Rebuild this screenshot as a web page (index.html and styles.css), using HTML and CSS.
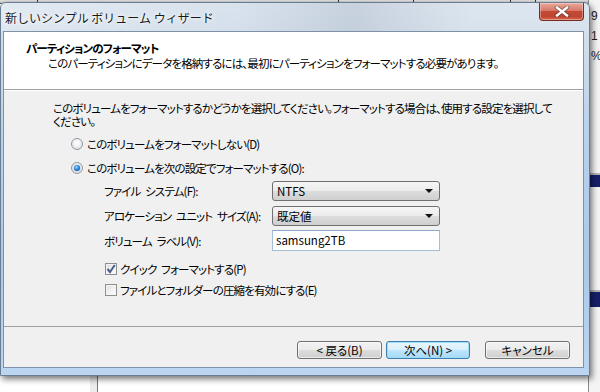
FILE: index.html
```html
<!DOCTYPE html>
<html lang="ja">
<head>
<meta charset="utf-8">
<link rel="stylesheet" href="styles.css">
</head>
<body>
<div class="desk">
  <div class="behind-top">
    <span class="sep s1"></span><span class="sep s2"></span><span class="sep s3"></span><span class="sep s4"></span><span class="sep s5"></span>
  </div>
  <div class="behind-right">
    <div class="br-text">9<br>1<br>%</div>
    <div class="br-band b1"></div>
    <div class="br-band b2"></div>
  </div>
  <div class="behind-bottom"></div>

  <div class="window">
    <div class="titlebar">
      <span class="title">新しいシンプル ボリューム ウィザード</span>
      <div class="close">
        <svg width="16" height="11" viewBox="0 0 16 11">
          <path d="M3 1.5 L13 9.5 M13 1.5 L3 9.5" stroke="#3a2a2a" stroke-width="4" stroke-linecap="square" opacity="0.55"/>
          <path d="M3 1.5 L13 9.5 M13 1.5 L3 9.5" stroke="#ffffff" stroke-width="2.4" stroke-linecap="square"/>
        </svg>
      </div>
    </div>
    <div class="client">
      <div class="header">
        <div class="h-title">パーティションのフォーマット</div>
        <div class="h-sub">このパーティションにデータを格納するには、最初にパーティションをフォーマットする必要があります。</div>
      </div>
      <div class="content">
        <p class="intro">このボリュームをフォーマットするかどうかを選択してください。フォーマットする場合は、使用する設定を選択して<br>ください。</p>
        <div class="radio-row"><span class="radio"></span><span>このボリュームをフォーマットしない(D)</span></div>
        <div class="radio-row second"><span class="radio on"></span><span>このボリュームを次の設定でフォーマットする(O):</span></div>
        <div class="form">
          <div class="frow"><span class="flabel">ファイル システム(F):</span><div class="combo"><span>NTFS</span><span class="arrow"></span></div></div>
          <div class="frow"><span class="flabel">アロケーション ユニット サイズ(A):</span><div class="combo"><span>既定値</span><span class="arrow"></span></div></div>
          <div class="frow r3"><span class="flabel">ボリューム ラベル(V):</span><div class="textbox">samsung2TB</div></div>
          <div class="check-row c1"><span class="check">
            <svg width="10" height="10" viewBox="0 0 10 10"><path d="M1.5 5 L4 8 L8.8 1" fill="none" stroke="#4a5f8e" stroke-width="2"/></svg>
          </span><span>クイック フォーマットする(P)</span></div>
          <div class="check-row c2"><span class="check"></span><span>ファイルとフォルダーの圧縮を有効にする(E)</span></div>
        </div>
      </div>
      <div class="footer">
        <button class="btn">&lt; 戻る(B)</button>
        <button class="btn default">次へ(N) &gt;</button>
        <button class="btn cancel">キャンセル</button>
      </div>
    </div>
  </div>
</div>
</body>
</html>
```

FILE: styles.css
```css
* { box-sizing: border-box; }
html, body {
  margin: 0;
  padding: 0;
  width: 600px;
  height: 392px;
  overflow: hidden;
  background: #ffffff;
  font-family: "Noto Sans CJK JP", "Noto Sans", sans-serif;
  font-size: 11.5px;
  letter-spacing: -0.85px;
  word-spacing: 3px;
  color: #000;
  font-feature-settings: "palt";
  white-space: nowrap;
}
.desk {
  position: relative;
  width: 600px;
  height: 392px;
}
.behind-top {
  position: absolute;
  left: 0; top: 0;
  width: 600px; height: 4px;
  background: linear-gradient(#e6e6e6, #bdbdbd);
  border-bottom: 1px solid #555;
}
.sep { position: absolute; top: 0; width: 1px; height: 4px; background: #333; }
.s1 { left: 37px; } .s2 { left: 338px; } .s3 { left: 413px; } .s4 { left: 510px; } .s5 { left: 535px; }
.behind-right {
  position: absolute;
  left: 588px; top: 0;
  width: 12px; height: 392px;
  background: #f4f4f4;
  border-left: 1px solid #888;
}
.br-text {
  position: absolute;
  left: 2px; top: 6px;
  font-family: "Liberation Sans", sans-serif;
  font-size: 12px;
  letter-spacing: 0;
  line-height: 20px;
  color: #222;
}
.br-band { position: absolute; left: 0; width: 12px; background: #16206a; border-top: 2px solid #b5b5b5; }
.b1 { top: 173px; height: 14px; }
.b2 { top: 290px; height: 17px; }
.behind-bottom {
  position: absolute;
  left: 90px; top: 370px;
  width: 8px; height: 22px;
  background: #ececec;
  border-right: 1px solid #777;
}
.window {
  position: absolute;
  left: 0; top: 2px;
  width: 590px; height: 374px;
  border-radius: 6px 6px 0 0;
  background: linear-gradient(to bottom, #d9e3ee 0, #d3dfeb 30px, #bad3ed 120px, #a9c8ea 260px, #bcd6f1 374px);
  border: 1px solid #6a7d92;
  box-shadow: 2px 3px 6px rgba(0,0,0,0.55);
  display: flex;
  flex-direction: column;
}
.titlebar {
  position: relative;
  height: 28px;
  flex: none;
  background: linear-gradient(90deg, rgba(255,255,255,0.25) 0, rgba(255,255,255,0) 40%, rgba(150,160,175,0.25) 60%, rgba(255,255,255,0.1) 80%);
}
.title {
  position: absolute;
  left: 4px; top: 7px;
  line-height: 16px;
  font-size: 12px;
  letter-spacing: 0;
  word-spacing: 0;
  font-feature-settings: normal;
  color: #1a1a1a;
  text-shadow: 0 0 6px #fff, 0 0 3px #fff;
}
.close {
  position: absolute;
  right: 5px; top: 0;
  width: 45px; height: 18px;
  border: 1px solid #7a2a22;
  border-top: none;
  border-radius: 0 0 4px 4px;
  background: linear-gradient(to bottom, #e9a99a 0, #d7786a 45%, #c24a35 50%, #c04532 80%, #d76a4e 100%);
  box-shadow: inset 0 0 0 1px rgba(255,255,255,0.35);
  display: flex;
  align-items: center;
  justify-content: center;
}
.client {
  flex: 1;
  margin: 0 5px 7px 2px;
  border: 1px solid #7f91a6;
  background: #f0f0f0;
  display: flex;
  flex-direction: column;
}
.header {
  height: 58px;
  flex: none;
  background: #fff;
  border-bottom: 1px solid #a0a0a0;
  padding: 9px 0 0 22px;
}
.h-title {
  font-weight: bold;
  line-height: 14px;
}
.h-sub {
  margin: 1px 0 0 22px;
  line-height: 14px;
}
.content {
  flex: 1;
  padding: 11px 0 0 49px;
  border-top: 1px solid #fff;
}
.intro {
  margin: 0;
  line-height: 13px;
}
.radio-row {
  display: flex;
  align-items: center;
  height: 16px;
  margin: 8px 0 0 18px;
  gap: 4px;
}
.radio-row.second { margin-top: 8px; }
.radio {
  position: relative;
  width: 12px; height: 12px;
  border-radius: 50%;
  border: 1px solid #8f99a5;
  background: radial-gradient(circle at 50% 40%, #ffffff 0, #f2f2f2 40%, #d4d4d4 100%);
}
.radio.on::after {
  content: "";
  position: absolute;
  left: 2px; top: 2px;
  width: 6px; height: 6px;
  border-radius: 50%;
  background: radial-gradient(circle at 40% 35%, #9bdcff 0, #2f86d6 45%, #0e3f8c 100%);
  box-shadow: 0 0 1px #1a4f9a;
}
.form {
  margin: 5px 0 0 51px;
}
.frow {
  display: flex;
  align-items: center;
  height: 20px;
  margin-bottom: 5px;
}
.frow.r3 { height: 21px; margin-top: -1px; }
.flabel {
  width: 168px;
  flex: none;
}
.combo {
  width: 168px;
  height: 20px;
  border: 1px solid #707070;
  border-radius: 3px;
  background: linear-gradient(to bottom, #f6f6f6 0, #ebebeb 50%, #dddddd 51%, #cfcfcf 100%);
  display: flex;
  align-items: center;
  justify-content: space-between;
  padding: 0 4px 0 4px;
  letter-spacing: 0;
}
.arrow {
  width: 0; height: 0;
  border-left: 4px solid transparent;
  border-right: 4px solid transparent;
  border-top: 4px solid #111;
  margin-right: 2px;
}
.textbox {
  width: 168px;
  height: 21px;
  border: 1px solid #a4bed8;
  border-top-color: #8aa8c8;
  background: #fff;
  padding: 2px 0 0 3px;
  line-height: 15px;
  letter-spacing: 0;
}
.check-row {
  display: flex;
  align-items: center;
  height: 14px;
  gap: 3px;
  margin-left: 1px;
}
.check-row.c1 { margin-top: 11px; }
.check-row.c2 { margin-top: 7px; }
.check {
  width: 12px; height: 12px;
  border: 1px solid #8e8f8f;
  background: linear-gradient(135deg, #dcdcdc 0, #f4f4f4 60%, #ffffff 100%);
  box-shadow: inset 0 0 0 1px #f4f4f4;
  display: flex;
  align-items: center;
  justify-content: center;
}
.footer {
  height: 41px;
  flex: none;
  border-top: 1px solid #a0a0a0;
  display: flex;
  justify-content: flex-end;
  align-items: flex-start;
  padding: 14px 13px 0 0;
}
.btn {
  width: 85px;
  height: 18px;
  margin: 0;
  padding: 0;
  font: inherit;
  line-height: 14px;
  color: #000;
  border: 1px solid #707070;
  border-radius: 3px;
  background: linear-gradient(to bottom, #f2f2f2 0, #ebebeb 50%, #dddddd 51%, #cfcfcf 100%);
  box-shadow: inset 0 0 0 1px rgba(255,255,255,0.6);
}
.btn.default {
  width: 84px;
  margin-left: 4px;
  border-color: #3c7fb1;
  background: linear-gradient(to bottom, #eaf6fd 0, #d9f0fc 50%, #bee6fd 51%, #a7d9f5 100%);
  box-shadow: inset 0 0 0 1px #9fdcf8;
}
.btn.cancel { margin-left: 15px; }
```
